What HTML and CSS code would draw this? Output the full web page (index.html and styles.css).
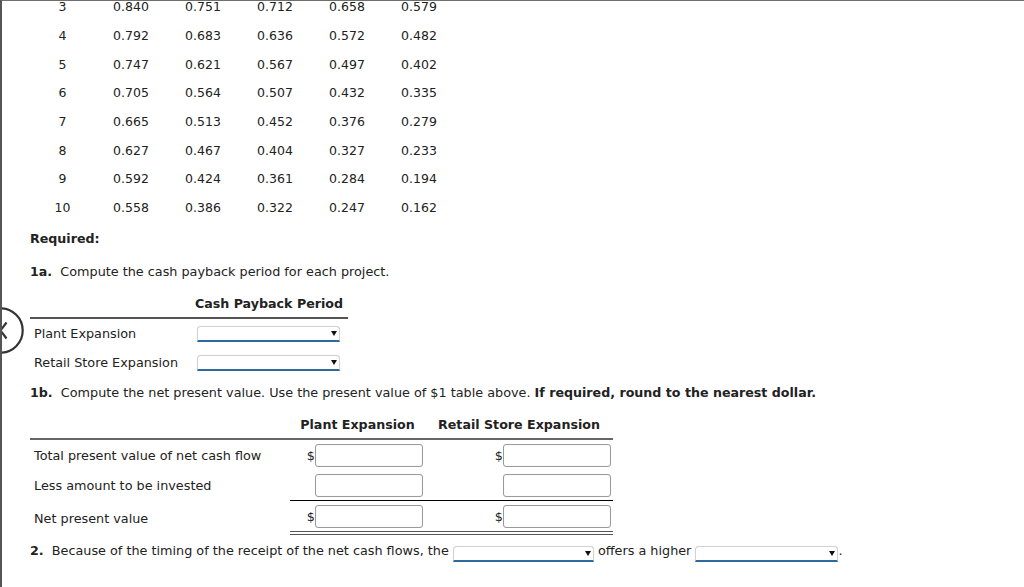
FILE: index.html
```html
<!DOCTYPE html>
<html lang="en">
<head>
<meta charset="utf-8">
<title>Capital budgeting</title>
<link rel="stylesheet" href="styles.css">
</head>
<body>
<div class="frame">
  <div class="content">
    <div class="pv">
      <div class="pv-row"><span>3</span><span>0.840</span><span>0.751</span><span>0.712</span><span>0.658</span><span>0.579</span></div>
      <div class="pv-row"><span>4</span><span>0.792</span><span>0.683</span><span>0.636</span><span>0.572</span><span>0.482</span></div>
      <div class="pv-row"><span>5</span><span>0.747</span><span>0.621</span><span>0.567</span><span>0.497</span><span>0.402</span></div>
      <div class="pv-row"><span>6</span><span>0.705</span><span>0.564</span><span>0.507</span><span>0.432</span><span>0.335</span></div>
      <div class="pv-row"><span>7</span><span>0.665</span><span>0.513</span><span>0.452</span><span>0.376</span><span>0.279</span></div>
      <div class="pv-row"><span>8</span><span>0.627</span><span>0.467</span><span>0.404</span><span>0.327</span><span>0.233</span></div>
      <div class="pv-row"><span>9</span><span>0.592</span><span>0.424</span><span>0.361</span><span>0.284</span><span>0.194</span></div>
      <div class="pv-row"><span>10</span><span>0.558</span><span>0.386</span><span>0.322</span><span>0.247</span><span>0.162</span></div>
    </div>

    <p class="req">Required:</p>
    <p class="q q1a"><b>1a.</b>&nbsp; Compute the cash payback period for each project.</p>

    <div class="pb">
      <div class="h"></div>
      <div class="h">Cash Payback Period</div>
      <div class="lbl">Plant Expansion</div>
      <div class="sel"><span class="dd"><select aria-label="Plant Expansion payback"></select></span></div>
      <div class="lbl">Retail Store Expansion</div>
      <div class="sel"><span class="dd"><select aria-label="Retail Store Expansion payback"></select></span></div>
    </div>

    <p class="q q1b"><b>1b.</b>&nbsp; Compute the net present value. Use the present value of $1 table above. <b>If required, round to the nearest dollar.</b></p>

    <div class="npv">
      <div class="h"></div>
      <div class="h">Plant Expansion</div>
      <div class="h">Retail Store Expansion</div>

      <div class="l">Total present value of net cash flow</div>
      <div class="c">$<input class="inp" type="text" aria-label="Plant total"></div>
      <div class="c">$<input class="inp" type="text" aria-label="Retail total"></div>

      <div class="l">Less amount to be invested</div>
      <div class="c rule"><input class="inp" type="text" aria-label="Plant invested"></div>
      <div class="c rule"><input class="inp" type="text" aria-label="Retail invested"></div>

      <div class="l">Net present value</div>
      <div class="c dbl">$<input class="inp" type="text" aria-label="Plant NPV"></div>
      <div class="c dbl">$<input class="inp" type="text" aria-label="Retail NPV"></div>
    </div>

    <p class="q q2"><b>2.</b>&nbsp; Because of the timing of the receipt of the net cash flows, the <span class="dd in w141"><select aria-label="project"></select></span> offers a higher <span class="dd in"><select aria-label="measure"></select></span>.</p>
  </div>

  <div class="nav-circle" aria-hidden="true">
    <svg width="47" height="47" viewBox="0 0 47 47"><circle cx="23.5" cy="23.5" r="22.2" fill="#fff" stroke="#333" stroke-width="2.2"/><path d="M29.5 15.5 L23.5 23.5 L29.5 31.5" fill="none" stroke="#333" stroke-width="2.2"/></svg>
  </div>
</div>
</body>
</html>
```

FILE: styles.css
```css
* { box-sizing: border-box; }

body {
  margin: 0;
  font-family: "DejaVu Sans", Verdana, sans-serif;
  font-size: 12.8px;
  color: #222;
  background: #fff;
}

b, .h, .req { font-size: 12.65px; }

.frame {
  position: relative;
  height: 587px;
  border-top: 1px solid #6e6e6e;
  border-left: 2px solid #555;
  overflow: hidden;
}

.content {
  padding-left: 28px;
}

/* present value table */
.pv { margin-top: -8px; }
.pv-row {
  display: grid;
  grid-template-columns: 65px repeat(5, 72px);
  height: 28.67px;
  align-items: center;
  text-align: center;
  line-height: 16px;
  font-size: 12.5px;
}

.req {
  margin: 9px 0 0;
  font-weight: bold;
  line-height: 16px;
}

.q {
  margin: 0;
  line-height: 16px;
}
.q1a { margin-top: 17px; }
.q1b { margin-top: 8px; }
.q2 { margin-top: 8px; }

/* payback table */
.pb {
  margin-top: 16px;
  width: 318px;
  display: grid;
  grid-template-columns: 160px 158px;
  grid-template-rows: 23px 29px 29px;
}
.pb .h {
  border-bottom: 2px solid #555;
  font-weight: bold;
  text-align: center;
  line-height: 16px;
}
.pb .lbl {
  display: flex;
  align-items: center;
  padding-left: 4px;
}
.pb .sel {
  display: flex;
  align-items: center;
  padding-left: 7px;
}

/* dropdowns */
.dd {
  position: relative;
  display: inline-block;
  width: 143px;
  height: 16px;
}
.dd.w141 { width: 141px; }
.dd.in { vertical-align: -4px; }
.dd select {
  -webkit-appearance: none;
  appearance: none;
  display: block;
  width: 100%;
  height: 100%;
  margin: 0;
  padding: 0;
  border: 1px solid #d2d2d2;
  border-bottom: 2px solid #2f6a9c;
  border-radius: 4px 4px 0 0;
  background: #fff;
  box-shadow: 0 0 1px rgba(0,0,0,0.15);
}
.dd::after {
  content: "";
  position: absolute;
  right: 3px;
  top: 5px;
  border-left: 3.5px solid transparent;
  border-right: 3.5px solid transparent;
  border-top: 5px solid #111;
}

/* npv table */
.npv {
  margin-top: 16px;
  width: 583px;
  display: grid;
  grid-template-columns: 260px 135px 188px;
  grid-template-rows: 23px 30px 31px 34px;
}
.npv .h {
  border-bottom: 2px solid #666;
  font-weight: bold;
  text-align: center;
  line-height: 16px;
}
.npv .l {
  display: flex;
  align-items: center;
  padding-left: 4px;
}
.npv .c {
  display: flex;
  align-items: center;
  justify-content: flex-end;
  padding-right: 2px;
}
.npv .rule { border-bottom: 1px solid #000; }
.npv .dbl { border-bottom: 4px double #555; }

.inp {
  width: 108px;
  height: 23px;
  margin: 0;
  border: 1px solid #9a9a9a;
  border-radius: 3px;
  background: #fff;
  box-shadow: inset 0 0 1px rgba(0,0,0,0.15);
}

/* left navigation circle (overlay) */
.nav-circle {
  position: absolute;
  left: -25px;
  top: 306px;
  width: 47px;
  height: 47px;
}
.nav-circle svg { display: block; }
```
